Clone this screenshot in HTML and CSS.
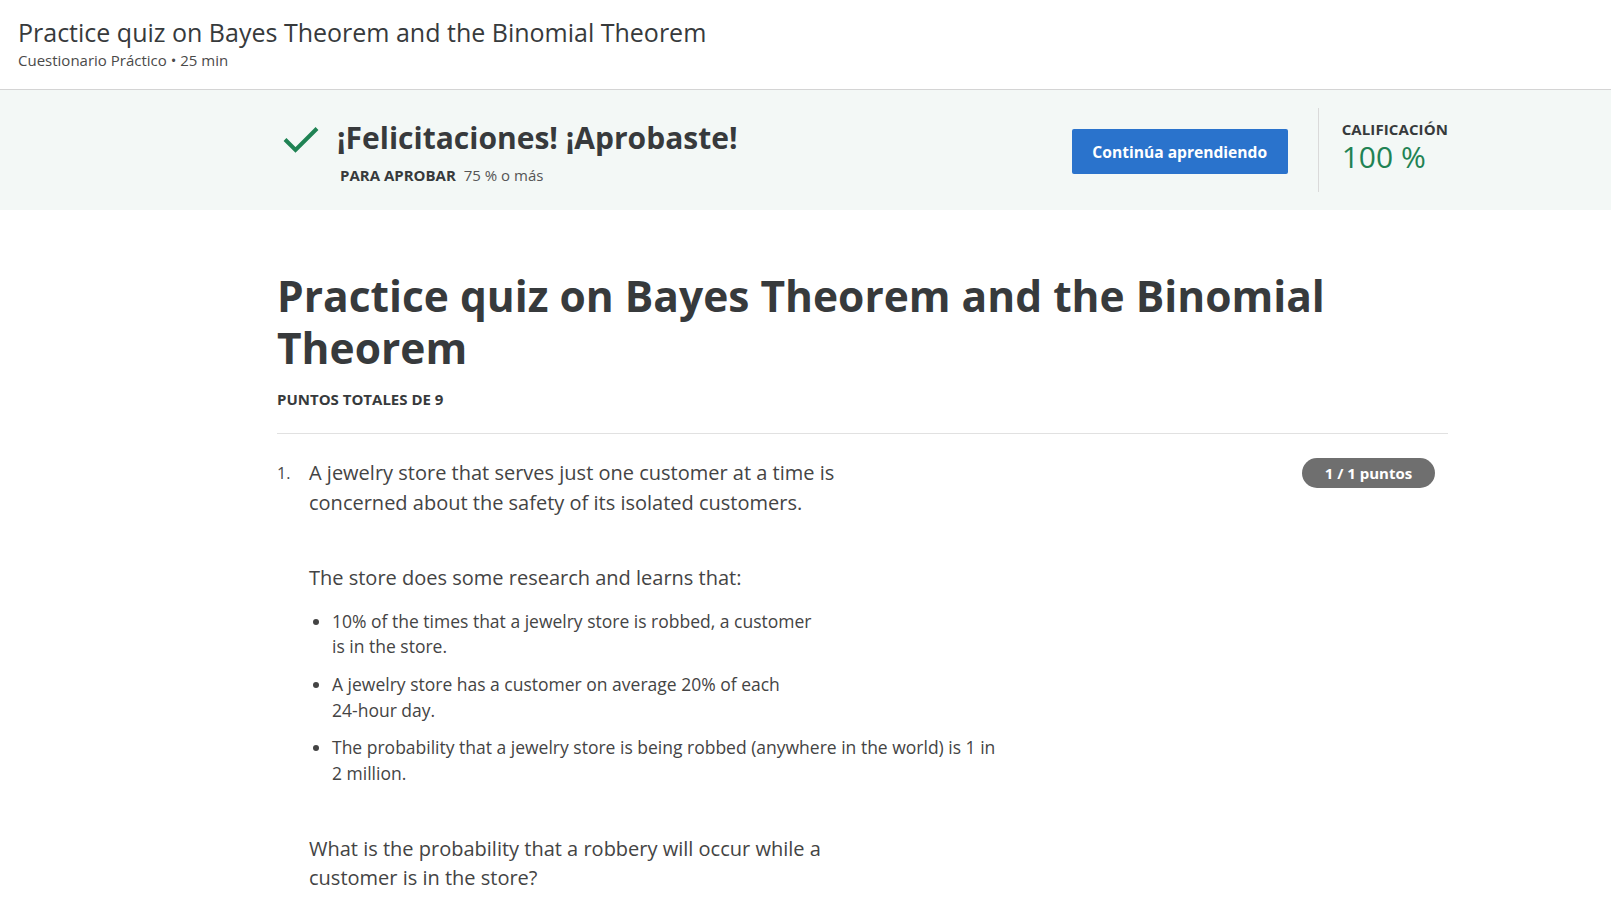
FILE: index.html
```html
<!DOCTYPE html>
<html lang="es">
<head>
<meta charset="utf-8">
<title>Practice quiz on Bayes Theorem and the Binomial Theorem</title>
<link rel="stylesheet" href="styles.css">
</head>
<body>
<header class="top-header">
  <h1 class="top-title">Practice quiz on Bayes Theorem and the Binomial Theorem</h1>
  <div class="top-sub">Cuestionario Práctico • 25 min</div>
</header>

<section class="banner">
  <div class="banner-inner">
    <div class="pass">
      <div class="check-wrap">
        <svg class="check" width="36" height="30" viewBox="0 0 36 30" aria-hidden="true">
          <path d="M2 15.5 L12.5 26 L34 4.5" fill="none" stroke="#1f8354" stroke-width="4"/>
        </svg>
      </div>
      <div class="pass-text">
        <div class="pass-title">¡Felicitaciones! ¡Aprobaste!</div>
        <div class="pass-sub"><span class="pass-label">PARA APROBAR</span> <span class="pass-val">75 % o más</span></div>
      </div>
    </div>
    <div class="right">
      <button class="btn">Continúa aprendiendo</button>
      <div class="vdiv"></div>
      <div class="grade">
        <div class="grade-label">CALIFICACIÓN</div>
        <div class="grade-val">100 %</div>
      </div>
    </div>
  </div>
</section>

<main class="content">
  <h2 class="quiz-title">Practice quiz on Bayes Theorem and the Binomial Theorem</h2>
  <div class="total">PUNTOS TOTALES DE 9</div>
  <hr class="sep">
  <div class="question">
    <div class="qnum">1.</div>
    <div class="qbody">
      <p class="qtext">A jewelry store that serves just one customer at a time is<br>concerned about the safety of its isolated customers.</p>
      <p class="qtext para2">The store does some research and learns that:</p>
      <ul class="facts">
        <li>10% of the times that a jewelry store is robbed, a customer<br>is in the store.</li>
        <li>A jewelry store has a customer on average 20% of each<br>24-hour day.</li>
        <li>The probability that a jewelry store is being robbed (anywhere in the world) is 1 in<br>2 million.</li>
      </ul>
      <p class="qtext para3">What is the probability that a robbery will occur while a<br>customer is in the store?</p>
    </div>
    <div class="badge">1 / 1 puntos</div>
  </div>
</main>
</body>
</html>
```

FILE: styles.css
```css
* { box-sizing: border-box; }
html, body { margin: 0; padding: 0; }
body {
  font-family: "Open Sans", "Noto Sans", sans-serif;
  color: #373a3c;
  background: #fff;
  overflow: hidden;
}

.top-header {
  height: 90px;
  padding: 16px 18px 0;
  border-bottom: 1px solid #d4d4d4;
}
.top-title {
  margin: 0;
  font-size: 25px;
  line-height: 32px;
  font-weight: 400;
  color: #373a3c;
}
.top-sub {
  margin-top: 2px;
  font-size: 15px;
  line-height: 20px;
  color: #4a4a4a;
}

.banner {
  background: #f3f8f6;
  padding: 18px 0 18px;
}
.banner-inner {
  margin-left: 277px;
  width: 1171px;
  height: 84px;
  display: flex;
  align-items: center;
}
.pass {
  display: flex;
  align-items: flex-start;
}
.check-wrap {
  width: 60px;
  padding-left: 6px;
  padding-top: 8px;
}
.check { display: block; }
.pass-title {
  margin-top: 2px;
  font-size: 30px;
  line-height: 40px;
  font-weight: 700;
  color: #373a3c;
}
.pass-sub {
  margin-top: 7px;
  padding-left: 3px;
  font-size: 15px;
  line-height: 20px;
}
.pass-label { font-weight: 700; color: #373a3c; margin-right: 4px; }
.pass-val { color: #555; }

.right {
  margin-left: auto;
  display: flex;
  align-items: center;
  height: 100%;
}
.btn {
  width: 216px;
  height: 45px;
  background: #2a73cc;
  color: #fff;
  border: none;
  border-radius: 2px;
  font-family: "Open Sans", "Noto Sans", sans-serif;
  font-size: 15.6px;
  font-weight: 700;
  margin-top: 3px;
}
.vdiv {
  width: 1px;
  height: 84px;
  background: #dadada;
  margin-left: 30px;
  margin-right: 23px;
}
.grade {
  margin-top: -9px;
}
.grade-label {
  font-size: 15px;
  line-height: 20px;
  font-weight: 700;
  letter-spacing: 0.1px;
  color: #373a3c;
}
.grade-val {
  margin-top: 2px;
  font-size: 30px;
  line-height: 32px;
  color: #1f8354;
}

.content {
  margin-left: 277px;
  width: 1171px;
  padding-top: 60px;
}
.quiz-title {
  margin: 0;
  font-size: 42.5px;
  line-height: 52px;
  font-weight: 700;
  color: #373a3c;
}
.total {
  margin-top: 15px;
  font-size: 15px;
  line-height: 20px;
  font-weight: 700;
  color: #373a3c;
}
.sep {
  margin: 24px 0 0;
  border: none;
  border-top: 1px solid #e1e1e1;
  height: 0;
}
.question {
  display: flex;
  align-items: flex-start;
  padding-top: 24px;
}
.qnum {
  width: 32px;
  font-size: 16px;
  line-height: 30px;
  color: #4a4a4a;
}
.qbody {
  flex: 1;
  color: #444;
}
.qtext {
  margin: 0;
  font-size: 20px;
  line-height: 29.5px;
}
.para2 { margin-top: 46px; }
.facts {
  margin: 16px 0 0;
  padding-left: 23px;
  font-size: 17.5px;
  line-height: 25.7px;
}
.facts li { margin-bottom: 12px; }
.facts li:last-child { margin-bottom: 0; }
.para3 { margin-top: 47px; }
.badge {
  margin-right: 13px;
  height: 30px;
  width: 133px;
  border-radius: 15px;
  background: #6f6f6f;
  color: #fff;
  font-size: 15px;
  font-weight: 700;
  line-height: 30px;
  text-align: center;
}
```
